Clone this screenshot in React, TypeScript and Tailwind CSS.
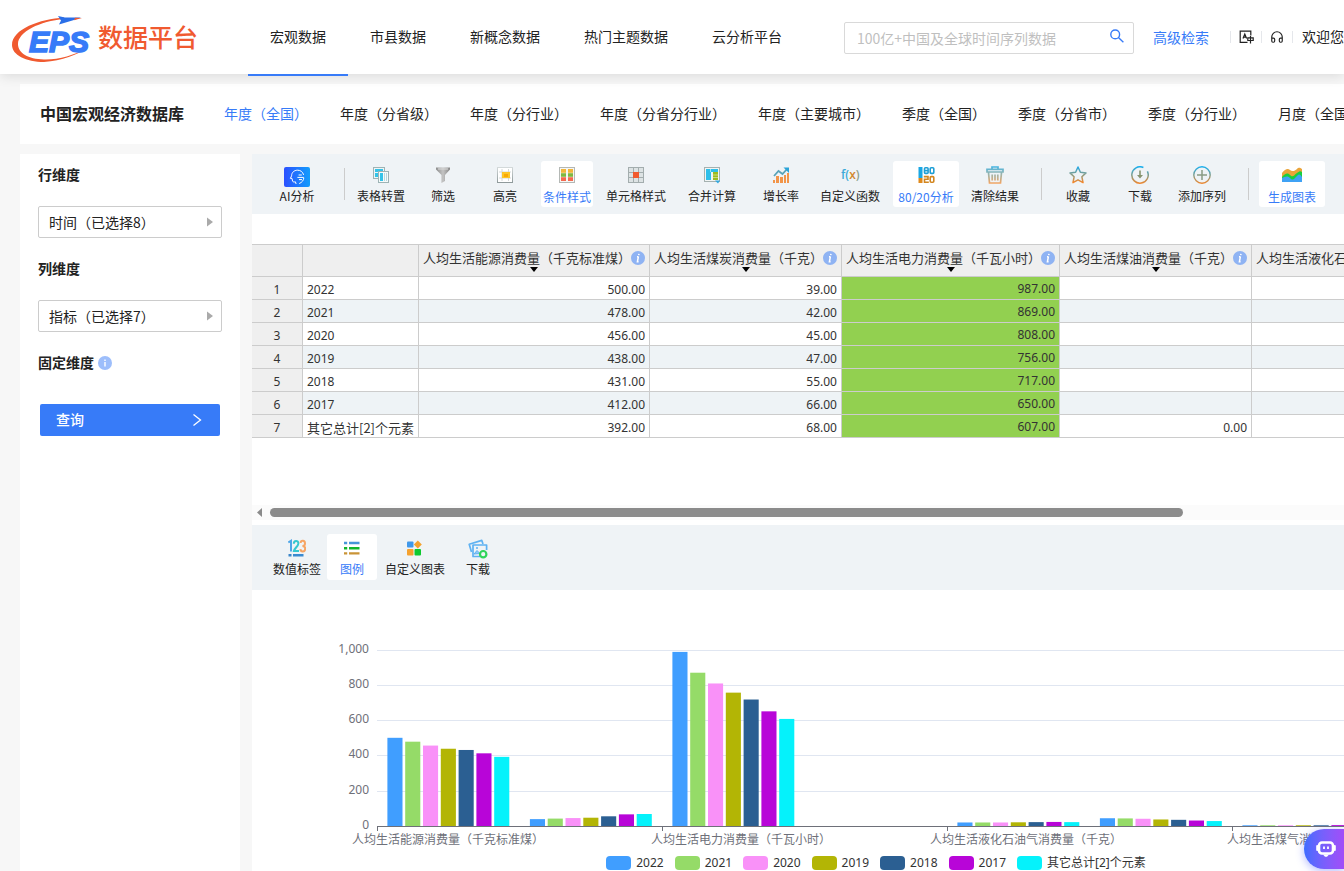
import React, { useState } from 'react';
import { Headphones } from 'lucide-react';

interface Tool {
  id: string;
  label: string;
  icon: React.ReactNode;
  wide?: boolean;
}

interface Row {
  name: string;
  values: (number | null)[];
}

const navItems = ['宏观数据', '市县数据', '新概念数据', '热门主题数据', '云分析平台'];

const databaseTabs = [
  '年度（全国）',
  '年度（分省级）',
  '年度（分行业）',
  '年度（分省分行业）',
  '年度（主要城市）',
  '季度（全国）',
  '季度（分省市）',
  '季度（分行业）',
  '月度（全国）',
];

const columns = [
  { label: '人均生活能源消费量（千克标准煤）', width: 'w-[231px]' },
  { label: '人均生活煤炭消费量（千克）', width: 'w-[192px]' },
  { label: '人均生活电力消费量（千瓦小时）', width: 'w-[218px]' },
  { label: '人均生活煤油消费量（千克）', width: 'w-[192px]' },
  { label: '人均生活液化石油气消费量（千克）', width: 'w-[231px]' },
];

const HIGHLIGHTED_COLUMN = 2;

const rows: Row[] = [
  { name: '2022', values: [500, 39, 987, null, null] },
  { name: '2021', values: [478, 42, 869, null, null] },
  { name: '2020', values: [456, 45, 808, null, null] },
  { name: '2019', values: [438, 47, 756, null, null] },
  { name: '2018', values: [431, 55, 717, null, null] },
  { name: '2017', values: [412, 66, 650, null, null] },
  { name: '其它总计[2]个元素', values: [392, 68, 607, 0, null] },
];

const series = [
  { name: '2022', color: '#409eff', swatch: 'bg-[#409eff]' },
  { name: '2021', color: '#95db68', swatch: 'bg-[#95db68]' },
  { name: '2020', color: '#f991f8', swatch: 'bg-[#f991f8]' },
  { name: '2019', color: '#b3b505', swatch: 'bg-[#b3b505]' },
  { name: '2018', color: '#2b5f92', swatch: 'bg-[#2b5f92]' },
  { name: '2017', color: '#b805d8', swatch: 'bg-[#b805d8]' },
  { name: '其它总计[2]个元素', color: '#05f2fb', swatch: 'bg-[#05f2fb]' },
];

// One entry per category, one value per series
const chartData = [
  [500, 478, 456, 438, 431, 412, 392],
  [39, 42, 45, 47, 55, 66, 68],
  [987, 869, 808, 756, 717, 650, 607],
  [],
  [20, 20, 20, 21, 22, 23, 22],
  [44, 43, 41, 37, 35, 31, 28],
  [4, 4, 4, 4, 4, 5, 5],
];

const axisLabels = [
  { x: 100, text: '人均生活能源消费量（千克标准煤）' },
  { x: 399, text: '人均生活电力消费量（千瓦小时）' },
  { x: 678, text: '人均生活液化石油气消费量（千克）' },
  { x: 975, text: '人均生活煤气消费量（千克）' },
];

const Gradients = () => (
  <svg width="0" height="0" className="absolute" aria-hidden="true">
    <defs>
      <linearGradient id="blueOrange" x1="0" y1="0" x2="0" y2="1">
        <stop offset="0" stopColor="#22a9e8" />
        <stop offset="0.5" stopColor="#8b9c84" />
        <stop offset="1" stopColor="#f5862a" />
      </linearGradient>
      <linearGradient id="blueOrangeLine" gradientUnits="userSpaceOnUse" x1="0" y1="0" x2="0" y2="18">
        <stop offset="0" stopColor="#12b0f5" />
        <stop offset="0.55" stopColor="#8b9c84" />
        <stop offset="1" stopColor="#f5862a" />
      </linearGradient>
      <linearGradient id="trash" gradientUnits="userSpaceOnUse" x1="0" y1="0" x2="0" y2="18">
        <stop offset="0" stopColor="#3fb4e6" />
        <stop offset="0.5" stopColor="#a3b3a5" />
        <stop offset="1" stopColor="#f8a45e" />
      </linearGradient>
      <linearGradient id="aiBlue" x1="0" y1="0" x2="1" y2="0">
        <stop offset="0" stopColor="#2b50ff" />
        <stop offset="1" stopColor="#129dfc" />
      </linearGradient>
      <linearGradient id="grayMetal" x1="0" y1="0" x2="1" y2="0">
        <stop offset="0" stopColor="#8d8d8d" />
        <stop offset="0.5" stopColor="#c4c4c4" />
        <stop offset="1" stopColor="#858585" />
      </linearGradient>
      <linearGradient id="frame" x1="0" y1="0" x2="0" y2="1">
        <stop offset="0" stopColor="#d3d9da" />
        <stop offset="1" stopColor="#8f9a9b" />
      </linearGradient>
    </defs>
  </svg>
);

const Icon = ({ children }: { children: React.ReactNode }) => (
  <svg width="18" height="18" viewBox="0 0 18 18" fill="none" className="shrink-0" aria-hidden="true">
    {children}
  </svg>
);

const AiIcon = () => (
  <svg width="26" height="20" viewBox="0 0 26 20" fill="none" className="shrink-0" aria-hidden="true">
    <rect width="26" height="20" rx="2" fill="url(#aiBlue)" />
    <path
      d="M19.5 7.5C18.6 4.6 16.4 3.2 13.6 3.2 10 3.2 7.6 5.6 7.6 8.8L6.4 11.4H8L8.6 14.2C9 15.2 10.2 15 11.4 14.8L12 16.6M15.6 16.4C18 15.4 19.6 13.4 19.8 11.2M15 8H17.4M13.8 10.4H19.4M15.4 12.6H17.6"
      stroke="#fff"
      strokeWidth="1"
      strokeLinecap="round"
      strokeLinejoin="round"
    />
  </svg>
);

const TransposeIcon = () => (
  <Icon>
    <rect x="1.5" y="1.5" width="11" height="11" fill="#eef5f6" stroke="#9db3b5" />
    <rect x="3" y="3" width="8" height="3" fill="#35c3e8" />
    <rect x="3" y="7" width="3" height="4" fill="#35c3e8" />
    <rect x="6.5" y="5.5" width="10" height="11" fill="#f6fafa" stroke="#9db3b5" />
    <rect x="8" y="7" width="3" height="8" fill="#35c3e8" />
    <rect x="12" y="7" width="1" height="8" fill="#b9d9e0" />
    <rect x="14" y="7" width="1" height="8" fill="#b9d9e0" />
  </Icon>
);

const FilterIcon = () => (
  <Icon>
    <path d="M2 1.5H16V3.5L11 9V15L7.5 17V9L2 3.5Z" fill="url(#grayMetal)" />
    <path d="M4 3H14" stroke="#dcdcdc" />
  </Icon>
);

const HighlightIcon = () => (
  <Icon>
    <rect x="1.5" y="1.5" width="15" height="15" fill="#fff" stroke="url(#frame)" />
    <path d="M6 3V15M12.5 3V15M3 6H15M3 12H15" stroke="#d3d8d8" />
    <rect x="6" y="6" width="8" height="6" fill="#fdc526" />
    <rect x="8" y="8" width="4" height="3" fill="#f9a806" />
  </Icon>
);

const ConditionIcon = () => (
  <Icon>
    <rect x="1.5" y="1.5" width="15" height="15" fill="#f6f6f4" stroke="#b4b8b5" />
    <rect x="3" y="3" width="5" height="4" fill="#f2b63a" />
    <rect x="10" y="3" width="5" height="4" fill="#f2b63a" />
    <rect x="3" y="7" width="5" height="4" fill="#7fb73f" />
    <rect x="10" y="7" width="5" height="4" fill="#7fb73f" />
    <rect x="3" y="11" width="5" height="4" fill="#f4694f" />
    <rect x="10" y="11" width="5" height="4" fill="#f4694f" />
    <path d="M3 7H8M10 7H15M3 11H8M10 11H15" stroke="#fff" strokeOpacity="0.5" strokeWidth="0.8" />
  </Icon>
);

const CellStyleIcon = () => (
  <Icon>
    <rect x="1" y="1" width="16" height="16" fill="#a3adae" />
    <g fill="#dde3e4">
      <rect x="2" y="2" width="4" height="4" />
      <rect x="7" y="2" width="4" height="4" />
      <rect x="12" y="2" width="4" height="4" />
      <rect x="2" y="7" width="4" height="4" />
      <rect x="12" y="7" width="4" height="4" />
      <rect x="2" y="12" width="4" height="4" />
      <rect x="7" y="12" width="4" height="4" />
      <rect x="12" y="12" width="4" height="4" />
    </g>
    <rect x="6" y="6" width="6" height="6" fill="#f15a2e" />
  </Icon>
);

const MergeIcon = () => (
  <Icon>
    <rect x="1.5" y="1.5" width="15" height="14" fill="#f2f5f4" stroke="#a5b1b0" />
    <path d="M3 3H15V6H8V14H3Z" fill="#2ebfea" />
    <path d="M7.5 3V6" stroke="#9fe0f2" />
    <rect x="10" y="6" width="5" height="8" fill="#9dbb1f" />
    <path d="M10 9H15M10 11.5H15" stroke="#d6e39a" strokeWidth="0.8" />
    <path d="M12 14.5H17L15 17.5Z" fill="#2fa8e0" />
  </Icon>
);

const GrowthIcon = () => (
  <Icon>
    <path d="M2 10L6.5 5L10.5 8L15 3" stroke="#58a3b8" strokeWidth="1.8" />
    <path d="M11.5 1.5H17V7Z" fill="#2ba4d8" />
    <g fill="#f2954a">
      <rect x="1" y="14" width="2" height="3" />
      <rect x="4" y="10" width="3" height="7" />
      <rect x="8" y="11" width="3" height="6" />
      <rect x="12" y="9" width="2" height="8" />
      <rect x="15" y="7" width="2" height="10" />
    </g>
  </Icon>
);

const FunctionIcon = () => (
  <svg width="20" height="18" viewBox="0 0 20 18" className="shrink-0" aria-hidden="true">
    <text x="1" y="13" fontSize="12" fontWeight="600" fontFamily="Open Sans, sans-serif">
      <tspan fill="#3eaad9">f(</tspan>
      <tspan fill="#d2882f">x</tspan>
      <tspan fill="#8d9f8b">)</tspan>
    </text>
  </svg>
);

const EightyTwentyIcon = () => (
  <Icon>
    <rect x="1.5" y="1" width="4" height="11" fill="#1aa7e4" />
    <rect x="1.5" y="12" width="4" height="5" fill="#e08a1c" />
    <g stroke="#1f9fd6" strokeWidth="1.6">
      <rect x="7.5" y="1.8" width="3.6" height="5.6" rx="1" />
      <path d="M7.5 4.6H11" />
      <rect x="13.2" y="1.8" width="3.6" height="5.6" rx="1" />
    </g>
    <g stroke="#d28620" strokeWidth="1.6">
      <path d="M6.8 10.6H11V13.2H7.5V16.2H11.8" />
      <rect x="13.2" y="10.6" width="3.6" height="5.6" rx="1" />
    </g>
  </Icon>
);

const TrashIcon = () => (
  <Icon>
    <path
      d="M1 3.4H17V6H1ZM6 3V1H12V3M2.5 6.5L3.5 17H14.5L15.5 6.5M6.2 8.5V14.5M9 8.5V14.5M11.8 8.5V14.5"
      stroke="url(#trash)"
      strokeWidth="1.7"
    />
  </Icon>
);

const StarIcon = () => (
  <Icon>
    <path
      d="M9 1L11.4 6.2L17 6.9L12.9 10.8L14 16.6L9 13.8L4 16.6L5.1 10.8L1 6.9L6.6 6.2Z"
      stroke="url(#blueOrange)"
      strokeWidth="1.5"
      strokeLinejoin="round"
    />
  </Icon>
);

const DownloadIcon = () => (
  <Icon>
    <path d="M16.4 5.4A8.2 8.2 0 1 1 12.4 1.5" stroke="url(#blueOrangeLine)" strokeWidth="1.5" />
    <path d="M8.2 4.5H9.8V9H12L9 12.6L6 9H8.2Z" fill="#86936f" />
  </Icon>
);

const AddIcon = () => (
  <Icon>
    <circle cx="9" cy="9" r="8.2" stroke="url(#blueOrangeLine)" strokeWidth="1.4" />
    <path d="M4 9H14M9 4V14" stroke="#8b9c84" strokeWidth="1.5" />
  </Icon>
);

const AreaIcon = () => (
  <svg width="20" height="18" viewBox="0 0 20 18" className="shrink-0" aria-hidden="true">
    <path d="M0 7C3 3 6 2 8 4S13 5 15 3S18 2 20 3V16H0Z" fill="#eaa43a" />
    <path d="M0 11C3 8 5 6 8 9S12 9 15 7S18 5 20 6V16H0Z" fill="#19cf3f" />
    <path d="M0 12C3 11 5 9 8 12S12 13 15 10S18 9 20 11V16H0Z" fill="#3fa2f5" />
  </svg>
);

const NumbersIcon = () => (
  <Icon>
    <g strokeWidth="2">
      <path d="M0.3 3.5L3 1.8V12.5" stroke="#4ea6e8" />
      <path d="M5.8 4.8C5.8 1 10.4 1 10.4 4.5C10.4 7 6 10 5.8 12H11" stroke="#35c7cf" />
      <path
        d="M12.6 4C12.8 1 17 1 17 4.4C17 6.4 15.6 6.9 14.4 6.9C15.8 6.9 17.2 7.6 17.2 9.6C17.2 13.4 12.8 13.4 12.4 10.2"
        stroke="#f6a564"
      />
    </g>
    <rect x="0.5" y="15" width="3" height="2.5" fill="#3a86c9" />
    <rect x="5" y="15" width="10.5" height="2.5" fill="#3a8ad0" />
  </Icon>
);

const LegendIcon = () => (
  <Icon>
    <path d="M1 4H4.2M6 4H16.5" stroke="#4795d8" strokeWidth="2.4" />
    <path d="M1 9.2H4.2M6 9.2H16.5" stroke="#12b52b" strokeWidth="2.4" />
    <path d="M1 14.4H4.2M6 14.4H16.5" stroke="#c99437" strokeWidth="2.4" />
  </Icon>
);

const CustomChartIcon = () => (
  <Icon>
    <rect x="1" y="2.5" width="6.5" height="6" rx="1" fill="#4098ea" />
    <path d="M11.8 1.5L15.8 5.5L11.8 9.5L7.8 5.5Z" fill="#f5a12e" />
    <rect x="1" y="10" width="6.5" height="6.5" rx="1" fill="#f5a12e" />
    <rect x="8.5" y="10" width="6.5" height="6.5" rx="1" fill="#0ec92f" />
  </Icon>
);

const PictureDownloadIcon = () => (
  <svg width="20" height="20" viewBox="0 0 20 20" fill="none" className="shrink-0" aria-hidden="true">
    <path d="M3.5 13L1.2 5.2L13.8 1.4L15 5" stroke="#5eb1f2" strokeWidth="1.7" strokeLinejoin="round" />
    <path d="M12 17.5H5V6H18.6V11" stroke="#5eb1f2" strokeWidth="1.7" strokeLinejoin="round" />
    <path d="M6 15L9 11.5L12 14.5Z" fill="#8ccaf7" stroke="#5eb1f2" />
    <circle cx="9" cy="9" r="1" fill="#5eb1f2" />
    <circle cx="15.2" cy="15.2" r="3.2" stroke="#2fd45a" strokeWidth="2.2" />
  </svg>
);

const analysisTools: Tool[] = [
  { id: 'transpose', label: '表格转置', icon: <TransposeIcon /> },
  { id: 'filter', label: '筛选', icon: <FilterIcon /> },
  { id: 'highlight', label: '高亮', icon: <HighlightIcon /> },
  { id: 'condition', label: '条件样式', icon: <ConditionIcon /> },
  { id: 'cell', label: '单元格样式', icon: <CellStyleIcon />, wide: true },
  { id: 'merge', label: '合并计算', icon: <MergeIcon />, wide: true },
  { id: 'growth', label: '增长率', icon: <GrowthIcon /> },
  { id: 'function', label: '自定义函数', icon: <FunctionIcon />, wide: true },
  { id: 'pareto', label: '80/20分析', icon: <EightyTwentyIcon />, wide: true },
  { id: 'clear', label: '清除结果', icon: <TrashIcon /> },
];

const resultTools: Tool[] = [
  { id: 'favorite', label: '收藏', icon: <StarIcon /> },
  { id: 'download', label: '下载', icon: <DownloadIcon /> },
  { id: 'add', label: '添加序列', icon: <AddIcon /> },
];

const ToolButton = ({ tool, active, onClick }: { tool: Tool; active?: boolean; onClick?: () => void }) => (
  <button
    type="button"
    onClick={onClick}
    className={`flex h-[46px] shrink-0 flex-col items-center rounded-[3px] pt-[5px] text-xs leading-4 whitespace-nowrap ${
      tool.wide ? 'w-[66px]' : 'w-[52px]'
    } ${active ? 'bg-white text-[#377bf8]' : 'text-[#222]'}`}
  >
    <span className="flex h-[18px] items-start justify-center">{tool.icon}</span>
    <span className={active ? 'mt-[5px]' : 'mt-1'}>{tool.label}</span>
  </button>
);

const Logo = () => (
  <a href="#" className="flex shrink-0 items-center pl-3" aria-label="EPS数据平台">
    <svg width="82" height="50" viewBox="0 0 82 50" aria-hidden="true">
      <path
        d="M52 5.5C28 7 0 17 0 33C0 43 14 50 32 50C50 49 66 42 74 37C62 43 46 48 32 47.5C16 47 6 41 6 32C6 20 28 9 52 7Z"
        fill="#f05a30"
      />
      <path d="M46 4L53 5.5L69 5.6L62 8L47 12.5L49 8.5Z" fill="#2a6fe8" />
      <path d="M63 5.8L70 6L62 8.2Z" fill="#f05a30" />
      <text
        x="17"
        y="40"
        fontSize="30"
        fontWeight="700"
        fontStyle="italic"
        fontFamily="Liberation Sans, Arial, sans-serif"
        fill="#377bf8"
        stroke="#377bf8"
        strokeWidth="1.6"
      >
        EPS
      </text>
    </svg>
    <span className="ml-1 text-[25px] font-medium text-[#f05a30]">数据平台</span>
  </a>
);

const Header = () => {
  const [keyword, setKeyword] = useState('');

  return (
    <header className="relative z-10 flex h-[74px] shrink-0 items-center bg-white whitespace-nowrap shadow-[0_2px_12px_rgba(0,0,0,0.12)]">
      <Logo />
      <nav className="ml-[50px] flex h-full shrink-0">
        {navItems.map((item, i) => (
          <a
            key={item}
            href="#"
            className={`h-[76px] px-[22px] text-sm leading-[72px] text-[#222] ${
              i === 0 ? 'border-b-2 border-[#377bf8]' : ''
            }`}
          >
            {item}
          </a>
        ))}
      </nav>
      <form className="mt-0.5 ml-10 flex h-8 w-[290px] shrink-0 items-center rounded-xs border border-[#d9d9d9] pr-[9px] pl-3">
        <input
          type="text"
          aria-label="搜索"
          value={keyword}
          onChange={(e) => setKeyword(e.target.value)}
          placeholder="100亿+中国及全球时间序列数据"
          className="min-w-0 flex-1 text-sm outline-none placeholder:text-[#bfbfbf]"
        />
        <button type="button" aria-label="查找" className="pb-1">
          <svg width="14" height="14" viewBox="0 0 14 14" fill="none" stroke="#377bf8" strokeWidth="1.4" aria-hidden="true">
            <circle cx="5.2" cy="5.4" r="4.4" />
            <path d="M8.4 8.6L13.4 13.2" />
          </svg>
        </button>
      </form>
      <a href="#" className="ml-[19px] shrink-0 text-sm text-[#377bf8]">
        高级检索
      </a>
      <div className="ml-[21px] flex shrink-0 items-center text-sm text-[#222]">
        <span className="h-3 w-px bg-gray-200" />
        <button type="button" aria-label="切换语言" className="ml-2 flex w-[22px]">
          <svg width="15" height="14" viewBox="0 0 15 14" fill="none" stroke="#222" strokeWidth="1.2" aria-hidden="true">
            <path d="M8.5 12.4H1.2V1.2H11.8V5.5M4 8.5L5.8 4L7.6 8.5M4.6 7.2H7" />
            <path d="M8.8 7.8H14.2V10.5H8.8ZM11.5 6V13.4" />
          </svg>
        </button>
        <span className="h-3 w-px bg-gray-200" />
        <button type="button" aria-label="客服" className="ml-2 flex w-[22px]">
          <Headphones className="h-[14px] w-[14px]" />
        </button>
        <span className="h-3 w-px bg-gray-200" />
        <span className="ml-[9px] pb-0.5">欢迎您，EPS用户</span>
      </div>
    </header>
  );
};

const DatabaseBar = () => (
  <div className="mt-[10px] ml-5 flex h-[60px] shrink-0 items-center overflow-hidden bg-white pb-0.5 pl-5 whitespace-nowrap">
    <h1 className="shrink-0 text-base font-bold text-[#222]">中国宏观经济数据库</h1>
    <nav className="ml-10 flex gap-8 text-sm text-[#222]">
      {databaseTabs.map((tab, i) => (
        <a key={tab} href="#" className={i === 0 ? 'text-[#377bf8]' : ''}>
          {tab}
        </a>
      ))}
    </nav>
  </div>
);

const DimensionButton = ({ label }: { label: string }) => (
  <button
    type="button"
    className="mt-[22px] mb-5 flex h-8 w-full items-center justify-between rounded-xs border border-[#ccc] pr-2 pl-[10px] text-sm text-[#222]"
  >
    {label}
    <svg width="6" height="10" viewBox="0 0 6 10" fill="#aaa" aria-hidden="true">
      <path d="M0 0.5L6 5L0 9.5Z" />
    </svg>
  </button>
);

const Sidebar = () => (
  <aside className="w-[220px] shrink-0 bg-white px-[18px] pt-[10px]">
    <h2 className="text-sm leading-5 font-bold text-[#222]">行维度</h2>
    <DimensionButton label="时间（已选择8）" />
    <h2 className="text-sm leading-5 font-bold text-[#222]">列维度</h2>
    <DimensionButton label="指标（已选择7）" />
    <h2 className="flex items-end gap-1 text-sm leading-5 font-bold text-[#222]">
      固定维度
      <svg width="14" height="14" viewBox="0 0 14 14" className="mb-0.5" aria-hidden="true">
        <circle cx="7" cy="7" r="7" fill="#9dbefb" />
        <path d="M7 3.5V5M7 6V10.5" stroke="#fff" strokeWidth="1.4" />
      </svg>
    </h2>
    <button
      type="button"
      className="mx-[2px] mt-8 flex h-8 w-[180px] items-center justify-between rounded-xs bg-[#377bf8] px-4 text-sm font-medium text-white"
    >
      <span className="pb-0.5">查询</span>
      <svg width="14" height="14" viewBox="0 0 14 14" fill="none" stroke="#fff" strokeWidth="1.3" aria-hidden="true">
        <path d="M3.5 1.5L10.5 7L3.5 12.5" />
      </svg>
    </button>
  </aside>
);

const AnalysisToolbar = () => {
  const [active, setActive] = useState<string[]>(['condition', 'pareto', 'chart']);

  const toggle = (id: string) =>
    setActive((prev) => (prev.includes(id) ? prev.filter((a) => a !== id) : [...prev, id]));

  return (
    <div className="flex h-[60px] shrink-0 items-start gap-[10px] overflow-hidden bg-[#eff3f6] pt-[7px] pl-3">
      <button
        type="button"
        className="flex w-[66px] shrink-0 flex-col items-center gap-px pt-[6px] text-xs leading-4 text-[#222]"
      >
        <AiIcon />
        AI分析
      </button>
      <span className="mt-[7px] ml-1 h-8 w-px shrink-0 bg-[#ccc]" />
      {analysisTools.map((tool) => (
        <ToolButton key={tool.id} tool={tool} active={active.includes(tool.id)} onClick={() => toggle(tool.id)} />
      ))}
      <span className="mt-[7px] ml-[10px] h-8 w-px shrink-0 bg-[#ccc]" />
      {resultTools.map((tool) => (
        <ToolButton key={tool.id} tool={tool} />
      ))}
      <span className="mt-[7px] ml-[10px] h-8 w-px shrink-0 bg-[#ccc]" />
      <ToolButton
        tool={{ id: 'chart', label: '生成图表', icon: <AreaIcon />, wide: true }}
        active={active.includes('chart')}
        onClick={() => toggle('chart')}
      />
    </div>
  );
};

const DataTable = () => (
  <div className="overflow-hidden">
    <table className="w-[1231px] table-fixed border-separate border-spacing-0 border-t border-[#ccc] text-[13px] text-[#333]">
      <thead>
        <tr className="h-8 bg-[#efefef]">
          <th aria-label="序号" className="w-[51px] border-r border-b border-[#ccc]" />
          <th aria-label="时间" className="w-[116px] border-r border-b border-[#ccc]" />
          {columns.map((column) => (
            <th
              key={column.label}
              className={`relative border-r border-b border-[#ccc] px-1 py-0 align-top font-normal ${column.width}`}
            >
              <span className="flex items-center justify-between leading-[26px] whitespace-nowrap">
                {column.label}
                <svg width="14" height="14" viewBox="0 0 14 14" className="shrink-0" aria-hidden="true">
                  <circle cx="7" cy="7" r="7" fill="#8fb3f3" />
                  <path d="M8 2.8L7.7 4.2M7.4 5.6L6.4 10.8H7.6M6 5.7H7.5" stroke="#fff" strokeWidth="1.5" fill="none" />
                </svg>
              </span>
              <svg width="8" height="5" viewBox="0 0 8 5" className="absolute bottom-1 left-1/2 -translate-x-1/2" aria-hidden="true">
                <path d="M0 0H8L4 5Z" fill="#000" />
              </svg>
            </th>
          ))}
        </tr>
      </thead>
      <tbody>
        {rows.map((row, i) => (
          <tr key={row.name} className={`h-[23px] ${i % 2 ? 'bg-[#eef3f6]' : 'bg-white'}`}>
            <td className="border-r border-b border-[#ccc] bg-[#efefef] px-0 pt-1 pb-0 text-center font-['Noto_Sans'] text-xs leading-[18px]">
              {i + 1}
            </td>
            <td
              className={`border-r border-b border-[#ccc] px-1 pb-0 leading-[18px] whitespace-nowrap ${
                i === rows.length - 1 ? 'pt-[3px]' : "pt-1 font-['Noto_Sans'] text-xs leading-[18px]"
              }`}
            >
              {row.name}
            </td>
            {row.values.map((value, col) => (
              <td
                key={col}
                className={`border-r border-b border-[#ccc] px-1 text-right font-['Noto_Sans'] text-xs leading-[18px] ${
                  col === HIGHLIGHTED_COLUMN ? 'bg-[#92d050] pt-[3px] pb-px' : 'pt-1 pb-0'
                }`}
              >
                {value === null ? '' : value.toFixed(2)}
              </td>
            ))}
          </tr>
        ))}
      </tbody>
    </table>
  </div>
);

const ScrollTrack = () => (
  <div className="flex h-[15px] items-center bg-[#fbfbfb] pl-[5px]">
    <svg width="5" height="9" viewBox="0 0 5 9" fill="#8b8b8b" aria-hidden="true">
      <path d="M5 0V9L0 4.5Z" />
    </svg>
    <div className="ml-2 flex-1">
      <div className="h-[9px] w-[85%] rounded-full bg-[#8b8b8b]" />
    </div>
  </div>
);

const ChartToolbar = () => {
  const [legend, setLegend] = useState(true);

  return (
    <div className="flex h-[65px] shrink-0 items-start gap-[5px] bg-[#eff3f6] pt-[9px] pl-5 text-xs leading-4 whitespace-nowrap text-[#222]">
      <button type="button" className="flex h-[46px] w-[50px] flex-col items-center gap-1 pt-[5px]">
        <NumbersIcon />
        数值标签
      </button>
      <button
        type="button"
        onClick={() => setLegend(!legend)}
        className={`flex h-[46px] w-[50px] flex-col items-center gap-1 rounded-[3px] pt-[5px] ${
          legend ? 'bg-white text-[#377bf8]' : ''
        }`}
      >
        <LegendIcon />
        图例
      </button>
      <button type="button" className="flex h-[46px] w-[66px] flex-col items-center gap-1 pt-[5px]">
        <CustomChartIcon />
        自定义图表
      </button>
      <button type="button" className="flex h-[46px] w-[50px] flex-col items-center gap-[2px] pt-[5px]">
        <PictureDownloadIcon />
        下载
      </button>
    </div>
  );
};

const Chart = () => {
  const left = 125;
  const baseline = 236;
  const categoryWidth = 142.5;
  const scale = 0.1764;
  const ticks = [0, 200, 400, 600, 800, 1000];

  return (
    <div className="min-h-0 flex-1 overflow-hidden bg-white">
      <svg width="1248" height="264" viewBox="0 0 1248 264" role="img" aria-label="人均生活消费量" fontSize="12">
        {ticks.map((tick) => {
          const y = Math.round(baseline - tick * scale) + 0.5;
          return (
            <g key={tick}>
              {tick > 0 && <path d={`M${left} ${y}H1190`} stroke="#e0e6f1" />}
              <text x="117" y={y + 2} textAnchor="end" fill="#6e7079" className="font-['Noto_Sans']">
                {tick.toLocaleString('en-US')}
              </text>
            </g>
          );
        })}
        {chartData.map((values, category) =>
          values.map((value, i) => (
            <rect
              key={`${category}-${i}`}
              x={left + 10.4 + category * categoryWidth + i * 17.8}
              y={baseline - value * scale}
              width={15.1}
              height={value * scale}
              fill={series[i].color}
            />
          ))
        )}
        <path d="M125 236.5H1190M125.5 236V241M410.5 236V241M695.5 236V241M980.5 236V241" stroke="#6e7079" />
        {axisLabels.map((label) => (
          <text key={label.text} x={label.x} y="254" fill="#6e7079">
            {label.text}
          </text>
        ))}
      </svg>
      <div className="flex w-[1248px] justify-center gap-[11px] pt-[1px] text-xs leading-4 text-[#333]">
        {series.map((s) => (
          <button key={s.name} type="button" className="flex items-center gap-[5px] font-['Noto_Sans','Noto_Sans_CJK_SC',sans-serif]">
            <span className={`h-[14px] w-[25px] rounded-sm ${s.swatch}`} />
            {s.name}
          </button>
        ))}
      </div>
    </div>
  );
};

const ChatButton = () => (
  <button
    type="button"
    aria-label="智能助手"
    className="fixed right-0 bottom-[2px] z-20 flex h-10 w-10 items-center justify-center rounded-l-full bg-linear-to-r from-[#3d6cff] to-[#a24cf8] pl-1 shadow-[0_2px_8px_rgba(60,80,255,0.4)]"
  >
    <svg width="20" height="16" viewBox="0 0 20 16" fill="none" aria-hidden="true">
      <rect x="3" y="1.5" width="14" height="11" rx="3" stroke="#fff" strokeWidth="2.6" />
      <path d="M1.2 5V9M18.8 5V9" stroke="#fff" strokeWidth="2" strokeLinecap="round" />
      <path d="M8 5.5V8M12 5.5V8" stroke="#fff" strokeWidth="1.8" />
      <path d="M7 13.5H13L11 15.8H9Z" fill="#fff" />
    </svg>
  </button>
);

const App: React.FC = () => {
  return (
    <div className="flex h-screen flex-col overflow-hidden bg-[#f7f7f7] font-['Noto_Sans_CJK_SC',sans-serif]">
      <Gradients />
      <Header />
      <DatabaseBar />
      <div className="mt-[10px] ml-5 flex min-h-0 flex-1 gap-3">
        <Sidebar />
        <main className="flex min-w-0 flex-1 flex-col">
          <AnalysisToolbar />
          <section className="flex h-[311px] shrink-0 flex-col justify-between bg-white pt-[30px] pb-[5px]">
            <DataTable />
            <ScrollTrack />
          </section>
          <ChartToolbar />
          <Chart />
        </main>
      </div>
      <ChatButton />
    </div>
  );
};

export default App;
